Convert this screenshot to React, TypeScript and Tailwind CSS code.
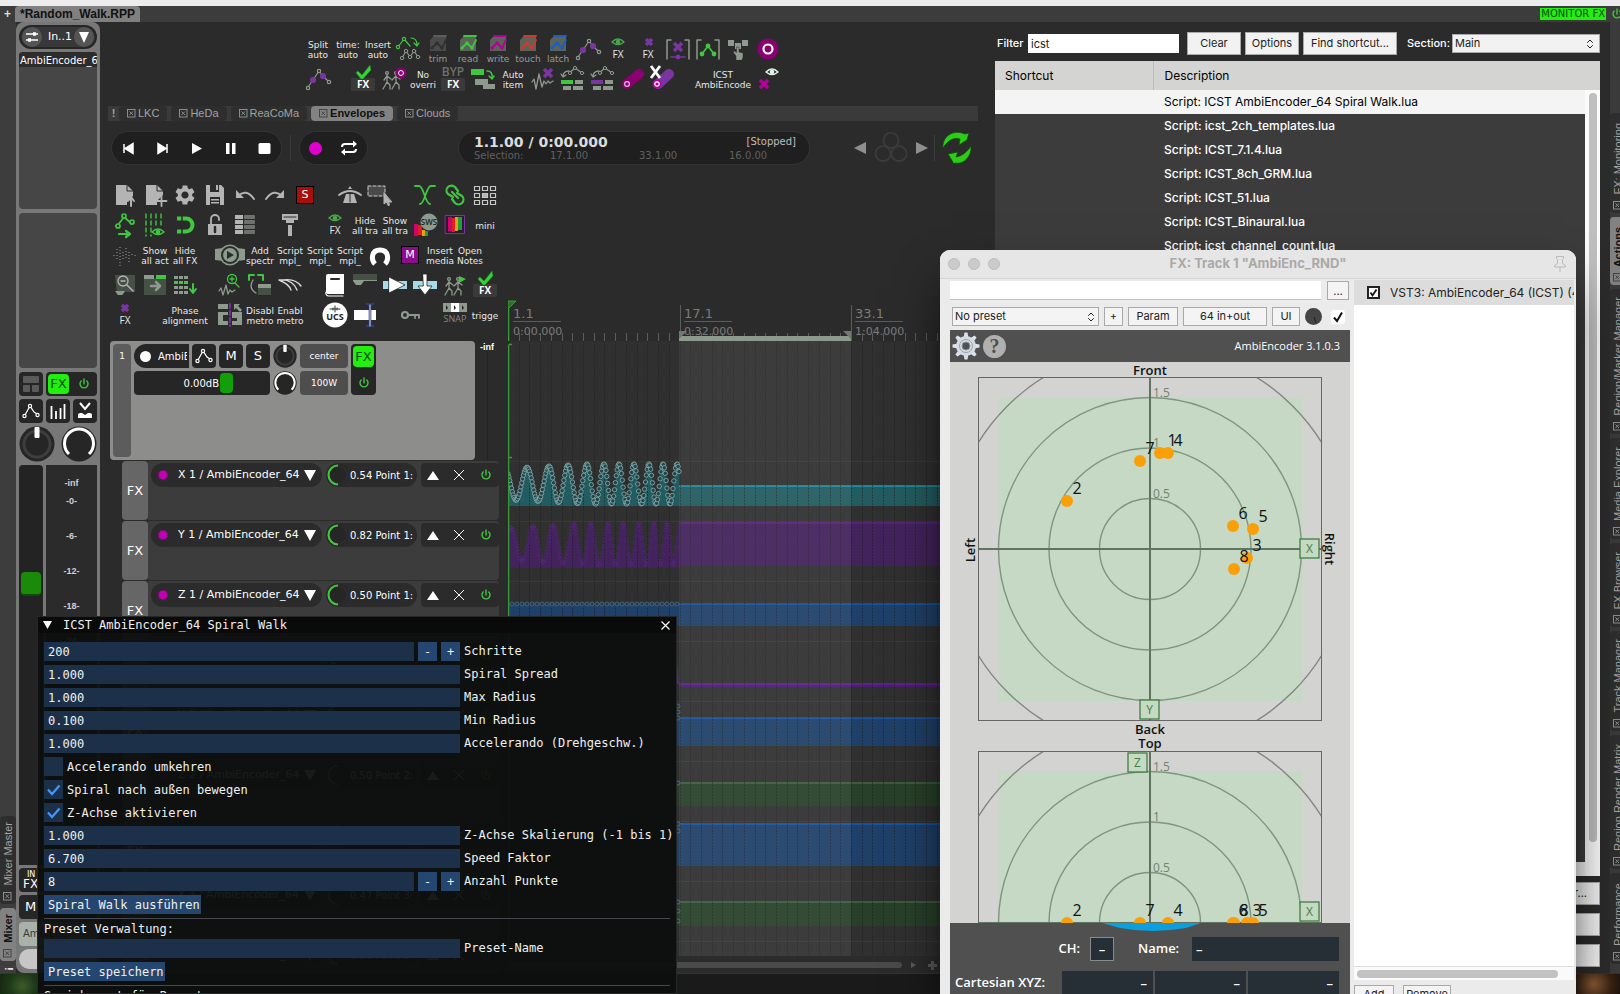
import type { ReactNode } from "react";
import clsx from "clsx";
import { MdSettings } from "react-icons/md";
import { LuChevronsUpDown } from "react-icons/lu";

const GREEN = "#3fc83f";
const GREY = "#b4b4b4";
const SAGE = "#8d9a8d";
const PURPLE = "#7a35a0";
const MAGENTA = "#8a0070";

/* ---------- small drawings ---------- */

function Ico({ children }: { children: ReactNode }) {
  return (
    <svg viewBox="0 0 30 30" className="size-[30px] overflow-visible" fill="none" strokeLinecap="round" strokeLinejoin="round">
      {children}
    </svg>
  );
}

function Nodes({ line = SAGE, dot = "#2b2b2b" }: { line?: string; dot?: string }) {
  return (
    <g stroke={line} strokeWidth="1.200">
      <path d="M5 23L10 16L16 7L20 12L25 17" />
      <circle cx="5" cy="24" r="1.700" fill="#2b2b2b" />
      <circle cx="16" cy="7" r="1.700" fill="#2b2b2b" />
      <circle cx="26" cy="18" r="1.700" fill="#2b2b2b" />
      <circle cx="10" cy="16" r="2.500" fill={dot} stroke={dot} />
      <circle cx="20" cy="12" r="2.500" fill={dot} stroke={dot} />
    </g>
  );
}

function Tick() {
  return (
    <>
      <rect x="3" y="14" width="24" height="13" rx="1" fill="#3a3a3a" />
      <path d="M10 7l4 4L22 1l1 5-8 9h-2L8 9z" fill="#35d435" stroke="#1c7a1c" strokeWidth="0.600" />
      <text x="15" y="24" textAnchor="middle" fontSize="10" fontWeight="700" fill="#fff" fontFamily="Open Sans, sans-serif">FX</text>
    </>
  );
}

function FxUnder({ children }: { children: ReactNode }) {
  return (
    <>
      {children}
      <text x="15" y="24" textAnchor="middle" fontSize="10" fill="#e8e8e8" fontFamily="Open Sans, sans-serif">FX</text>
    </>
  );
}

function EyeShape({ color = "#4aa64a", x = 15, y = 8 }: { color?: string; x?: number; y?: number }) {
  return (
    <g transform={`translate(${x} ${y})`}>
      <path d="M-6 0Q0-6 6 0Q0 5 -6 0z" stroke={color} strokeWidth="1.500" />
      <circle r="2.300" fill={color} />
    </g>
  );
}

function CrossShape({ x, y, color = PURPLE, size = 4 }: { x: number; y: number; color?: string; size?: number }) {
  return (
    <path
      d={`M${x - size} ${y - size}l${size * 2} ${size * 2}m0-${size * 2}l-${size * 2} ${size * 2}`}
      stroke={color}
      strokeWidth="3.600"
      strokeLinecap="butt"
    />
  );
}

function Walkers() {
  return (
    <g stroke={SAGE} strokeWidth="1.300">
      <circle cx="9" cy="9" r="1.400" />
      <circle cx="18" cy="9" r="1.400" />
      <path d="M9 11v7M9 12l-3 4M9 12l4 3M9 18l-4 7M9 18l3 3v4M18 11v7M18 12l-4 4M18 12l4 3M18 18l-4 7M18 18l3 3v4" />
    </g>
  );
}

function ModeIcon({ color, dim }: { color: string; dim?: boolean }) {
  const c = dim ? "#303030" : color;
  return (
    <Ico>
      <path d="M7 6l4-4h12v15H7z" fill={dim ? "#4a4c4a" : "#5b635b"} />
      <path d="M11 2h12" stroke={dim ? "#5b5b5b" : color} strokeWidth="1.800" />
      <path d="M9 14l5-5 5 5 4-8" stroke={c} strokeWidth="1.800" />
      <circle cx="9" cy="14" r="1.700" fill={c} />
      <circle cx="19" cy="14" r="1.700" fill={c} />
      <circle cx="14" cy="9" r="1.700" fill={c} />
    </Ico>
  );
}

function Power({ className = "size-3.5" }: { className?: string }) {
  return (
    <svg viewBox="0 0 14 14" className={className} fill="none" stroke={GREEN} strokeWidth="1.400" strokeLinecap="round">
      <path d="M7 2v5M4.200 4a4 4 0 1 0 5.600 0" />
    </svg>
  );
}

function TrackNodes() {
  return (
    <svg viewBox="0 0 24 24" className="size-6" fill="none" stroke="#fff" strokeWidth="1.200">
      <path d="M6 16L11 7L15 13L18 15" />
      <circle cx="5.500" cy="17" r="1.600" fill="#262626" />
      <circle cx="11" cy="7" r="1.600" fill="#262626" />
      <circle cx="18.500" cy="16" r="1.600" fill="#262626" />
    </svg>
  );
}

function Knob({ kind, className = "size-6" }: { kind: "pan" | "ring" | "half"; className?: string }) {
  return (
    <svg viewBox="0 0 36 36" className={clsx("shrink-0", className)} fill="none">
      <circle cx="18" cy="18" r="17.500" fill="#262626" />
      {kind === "pan" && (
        <>
          <circle cx="18" cy="18" r="13" stroke="#3e3e3e" strokeWidth="3" />
          <rect x="15.500" y="1" width="5" height="11" rx="1" fill="#fff" />
        </>
      )}
      {kind === "ring" && <path d="M8 28A14.500 14.500 0 1 1 28 28" stroke="#fff" strokeWidth="3" />}
      {kind === "half" && (
        <>
          <circle cx="18" cy="18" r="15" stroke="#303030" strokeWidth="2" />
          <path d="M18 33.500A15.500 15.500 0 0 1 18 2.500" stroke={GREEN} strokeWidth="3.500" />
        </>
      )}
    </svg>
  );
}

/* ---------- toolbars ---------- */

type Cell = { name?: string; lines?: string[]; icon?: ReactNode; gap?: boolean; wide?: boolean };

const gap: Cell = { gap: true };
const text = (...lines: string[]): Cell => ({ lines });

function mode(name: string, color: string, dim?: boolean): Cell {
  return { name, lines: ["", name], icon: <ModeIcon color={color} dim={dim} /> };
}

const envelopeRows: Cell[][] = [
  [
    text("Split", "auto"),
    text("time:", "auto"),
    text("Insert", "auto"),
    {
      name: "Convert envelope",
      icon: (
        <Ico>
          <g stroke={GREEN} strokeWidth="1.200">
            <path d="M5 13l6-8 6 7" />
            <circle cx="5" cy="13" r="1.600" fill="#2b2b2b" />
            <circle cx="11" cy="5" r="1.600" fill="#2b2b2b" />
            <path d="M18 4q6 0 6 7m-3-2l3 3 2-3" />
          </g>
          <path d="M9 24l4-7 4 6 4-6 4 6" stroke={SAGE} strokeWidth="1.200" />
          {[[9, 24], [13, 17], [17, 23], [21, 17], [25, 23]].map(([x, y]) => (
            <circle key={x} cx={x} cy={y} r="1.700" stroke={SAGE} fill="#2b2b2b" />
          ))}
        </Ico>
      ),
    },
    mode("trim", "#666", true),
    mode("read", GREEN),
    mode("write", "#b3009c"),
    mode("touch", "#d0392c"),
    mode("latch", "#1b5fc0"),
    { name: "Envelope points", icon: <Ico><Nodes dot={PURPLE} /></Ico> },
    { name: "Show FX", icon: <Ico><FxUnder><EyeShape /></FxUnder></Ico> },
    { name: "Remove FX", icon: <Ico><FxUnder><CrossShape x={16} y={8} size={3} /></FxUnder></Ico> },
    {
      name: "Delete in selection",
      icon: (
        <Ico>
          <path d="M8 6H4v19M22 6h4v19" stroke={SAGE} strokeWidth="1.500" />
          <CrossShape x={15} y={13} />
          <path d="M8 23h14" stroke={PURPLE} strokeWidth="1.600" />
          <circle cx="15" cy="23" r="2.400" fill={PURPLE} />
        </Ico>
      ),
    },
    {
      name: "Select points",
      icon: (
        <Ico>
          <path d="M8 6H4v19M22 6h4v19" stroke={SAGE} strokeWidth="1.500" />
          <path d="M9 20l6-8 6 8" stroke={GREEN} strokeWidth="1.600" />
          <circle cx="9" cy="20" r="2.400" fill={GREEN} />
          <circle cx="15" cy="12" r="2.400" fill={GREEN} />
          <circle cx="21" cy="20" r="2.400" fill={GREEN} />
        </Ico>
      ),
    },
    {
      name: "Touch items",
      icon: (
        <Ico>
          <path d="M5 6h6v6H5zM12 9h6v6h-6zM19 6h6v6h-6z" fill={SAGE} />
          <path d="M13 26v-4l-3-4 1.500-1 2 1.500V13h2.500v5l4 1v4l-1 3z" fill={SAGE} stroke="#2b2b2b" strokeWidth="0.500" />
        </Ico>
      ),
    },
    {
      name: "Record ring",
      icon: (
        <Ico>
          <circle cx="15" cy="15" r="10.500" fill={MAGENTA} />
          <circle cx="15" cy="15" r="4.500" stroke="#fff" strokeWidth="2.200" />
        </Ico>
      ),
    },
  ],
  [
    { name: "Envelope nodes", icon: <Ico><Nodes dot={PURPLE} /></Ico> },
    gap,
    { name: "FX enabled", icon: <Ico><Tick /></Ico> },
    {
      name: "Walk record",
      icon: (
        <Ico>
          <Walkers />
          <circle cx="23" cy="9" r="5.500" fill={MAGENTA} />
          <circle cx="23" cy="9" r="2.500" stroke="#eee" />
        </Ico>
      ),
    },
    text("No", "overri"),
    {
      name: "Bypass FX",
      icon: (
        <Ico>
          <rect x="3" y="14" width="24" height="13" rx="1" fill="#3a3a3a" />
          <text x="15" y="12" textAnchor="middle" fontSize="12" fontWeight="600" fill="#707070" fontFamily="Open Sans, sans-serif">BYP</text>
          <text x="15" y="24" textAnchor="middle" fontSize="10" fontWeight="700" fill="#fff" fontFamily="Open Sans, sans-serif">FX</text>
        </Ico>
      ),
    },
    {
      name: "Move items",
      icon: (
        <Ico>
          <path d="M3 5h13v6H3z" fill={GREEN} />
          <path d="M7 15h13v6H7zM15 20h12v5H15z" fill={SAGE} />
          <path d="M19 7q6 0 5 7m-3-2l3 3 2-3" stroke={GREEN} strokeWidth="1.400" />
        </Ico>
      ),
    },
    text("Auto", "item"),
    {
      name: "Delete peaks",
      icon: (
        <Ico>
          <path d="M4 18l2-3 2 10 3-15 3 13 2-6 2 3 2-3 2 2 3-2" stroke={SAGE} strokeWidth="1.300" />
          <CrossShape x={20} y={9} />
        </Ico>
      ),
    },
    ...([GREEN, PURPLE] as const).map((c): Cell => ({
      name: c === GREEN ? "Envelope to items" : "Envelope to lanes",
      icon: (
        <Ico>
          <path d="M11 9l6-5 7 5" stroke={SAGE} strokeWidth="1.200" />
          <path d="M5 13q0-6 6-6M3 10l2 3 3-2" stroke={SAGE} strokeWidth="1.300" />
          <circle cx="17" cy="4" r="1.600" fill="#2b2b2b" stroke={SAGE} />
          <circle cx="12" cy="9" r="1.600" fill="#2b2b2b" stroke={SAGE} />
          <circle cx="24" cy="9" r="1.600" fill="#2b2b2b" stroke={SAGE} />
          <path d="M3 16h12v4H3z" fill={c} />
          <path d="M17 16h8v4h-8zM5 22h8v4H5zM15 22h10v4h-10z" fill={SAGE} />
        </Ico>
      ),
    })),
    {
      name: "Link record",
      icon: (
        <Ico>
          <path d="M9 20L21 10" stroke={MAGENTA} strokeWidth="10" />
          <circle cx="9" cy="20" r="2.400" stroke="#e6b8e0" strokeWidth="1.200" />
        </Ico>
      ),
    },
    {
      name: "Unlink record",
      icon: (
        <Ico>
          <path d="M10 20L21 10" stroke={PURPLE} strokeWidth="10" />
          <circle cx="9" cy="20" r="4.500" fill="#b3009c" />
          <circle cx="9" cy="20" r="2.200" stroke="#fff" strokeWidth="1.200" />
          <path d="M3 2l9 12M12 2L3 14" stroke="#fff" strokeWidth="2.800" strokeLinecap="butt" />
        </Ico>
      ),
    },
    gap,
    { lines: ["ICST", "AmbiEncode"], wide: true },
    { name: "Hide encoder", icon: <Ico><EyeShape color="#dff3e8" x={19} y={8} /><CrossShape x={11} y={20} color="#b3009c" /></Ico> },
  ],
];

const mainRows: Cell[][] = [
  [
    {
      name: "Open project",
      icon: <Ico><path d="M6 5h11l6 6v5l-6 6v3H6z" fill={GREY} /><path d="M17 5v6h6" stroke="#2b2b2b" /><path d="M21 26v-8m-3 3l3-4 3 4" stroke={GREY} strokeWidth="2" /></Ico>,
    },
    {
      name: "New project",
      icon: <Ico><path d="M6 5h11l6 6v4l-6 6v4H6z" fill={GREY} /><path d="M17 5v6h6" stroke="#2b2b2b" /><path d="M21.500 16v10m-5-5h10" stroke={GREY} strokeWidth="1.800" /></Ico>,
    },
    { name: "Project settings", icon: <MdSettings className="size-6 text-[#b4b4b4]" /> },
    {
      name: "Save",
      icon: <Ico><path d="M6 5h15l3 3v17H6z" fill={GREY} /><path d="M10 5h9v7h-9zM10 17h10v8H10z" fill="#2b2b2b" /><path d="M16 5h2v5h-2zM11 19h8v1.500h-8zM11 22h8v1.500h-8z" fill={GREY} /></Ico>,
    },
    { name: "Undo", icon: <Ico><path d="M8 16q8-8 16 3" stroke={GREY} strokeWidth="2" /><path d="M6 10v8h8z" fill={GREY} /></Ico> },
    { name: "Redo", icon: <Ico><path d="M22 16q-8-8-16 3" stroke={GREY} strokeWidth="2" /><path d="M24 10v8h-8z" fill={GREY} /></Ico> },
    {
      name: "Solo",
      icon: <span className="grid size-[18px] place-items-center border border-black bg-[#a80f08] text-[11px] text-white">S</span>,
    },
    gap,
    {
      name: "Metronome",
      icon: <Ico><path d="M4 15q11-8 22 0" stroke={GREY} strokeWidth="2" /><path d="M11 14h8l3 9H8zM13 9l2-3 2 3z" fill={GREY} /><path d="M15 14v8" stroke="#2b2b2b" /></Ico>,
    },
    {
      name: "Marquee select",
      icon: <Ico><path d="M3 6h17v10H3z" fill="#4a4a4a" stroke="#d0d0d0" strokeDasharray="3 2" /><path d="M19 13v11l2.500-2 2 4 1-1-1-3h3z" fill={GREY} stroke={GREY} /></Ico>,
    },
    gap,
    {
      name: "Crossfade",
      icon: <Ico><path d="M5 6h4c5 0 6 18 11 18M25 6h-4c-5 0-6 18-11 18" stroke={GREEN} strokeWidth="1.800" /></Ico>,
    },
    {
      name: "Grouping",
      icon: <Ico><path d="M13 17l-5-3a4.500 4.500 0 1 1 7-7l3 4M17 13l5 3a4.500 4.500 0 1 1-7 7l-3-4M12 12l6 6" stroke={GREEN} strokeWidth="2.200" /></Ico>,
    },
    {
      name: "Grid",
      icon: (
        <Ico>
          {[4.5, 12.5, 20.5].map((x) =>
            [6.5, 13.5, 20.5].map((y) => (
              <rect key={`${x}${y}`} x={x} y={y} width="5" height="4" stroke="#c8c8c8" strokeWidth="1.200" fill={x === 12.5 && y === 13.5 ? GREY : "none"} />
            ))
          )}
        </Ico>
      ),
    },
  ],
  [
    {
      name: "Move envelope points",
      icon: (
        <Ico>
          <g stroke={GREEN} strokeWidth="1.700">
            <path d="M8 15l6-8 8 7" />
            <circle cx="8" cy="16" r="2" fill="#2b2b2b" />
            <circle cx="14" cy="6" r="2" fill="#2b2b2b" />
            <circle cx="22" cy="12" r="2" fill="#2b2b2b" />
            <path d="M9 24h11m-4-3l4 3-4 3" strokeWidth="2.200" />
          </g>
        </Ico>
      ),
    },
    {
      name: "Show grid",
      icon: <Ico><path d="M6 4v22M11 4v22M16 4v11M21 4v11" stroke={GREEN} strokeWidth="1.400" strokeDasharray="4 3" /><EyeShape color={GREEN} x={18} y={22} /></Ico>,
    },
    { name: "Snap", icon: <Ico><path d="M7 8.500h9a6.500 6.500 0 0 1 0 13H7" stroke={GREEN} strokeWidth="4" strokeLinecap="butt" /><path d="M12 5v20" stroke="#2b2b2b" strokeWidth="1.500" /></Ico> },
    { name: "Lock", icon: <Ico><path d="M8 14h14v11H8z" fill={GREY} /><path d="M11 14V9a4 4 0 0 1 8 0v1" stroke={GREY} strokeWidth="1.800" /><path d="M15 17v5" stroke="#2b2b2b" strokeWidth="2.500" /></Ico> },
    {
      name: "Track list",
      icon: <Ico>{[5, 10, 15, 20].map((y) => <g key={y}><rect x="5" y={y} width="8" height="4" fill={GREY} /><rect x="14" y={y} width="11" height="4" rx="1" fill="#6e726e" /></g>)}</Ico>,
    },
    gap,
    { name: "Brush", icon: <Ico><path d="M7 4h16v6H7zM11 10h8v3h-8zM13 15h4v11h-4z" fill={GREY} /><path d="M9 7h12" stroke="#2b2b2b" /></Ico> },
    gap,
    { name: "Show FX chain", icon: <Ico><FxUnder><EyeShape /></FxUnder></Ico> },
    text("Hide", "all tra"),
    text("Show", "all tra"),
    {
      name: "SWS",
      icon: (
        <Ico>
          <path d="M4 14h4v12H4z" fill="#d6006c" /><path d="M8 15h4v10H8z" fill="#e02020" /><path d="M12 20h3v6h-3z" fill="#e0a020" /><path d="M15 21h3v5h-3z" fill="#20a030" />
          <circle cx="19" cy="12" r="8.500" fill={SAGE} />
          <text x="19" y="15" textAnchor="middle" fontSize="8" fontWeight="600" fill="#222" fontFamily="Open Sans, sans-serif">SWS</text>
        </Ico>
      ),
    },
    {
      name: "Colors",
      icon: (
        <Ico>
          <rect x="5.500" y="5.500" width="19" height="18" stroke={PURPLE} fill="#2b1a33" />
          <path d="M8 7h4v14H8z" fill="#d6006c" /><path d="M12 8h3v14h-3z" fill="#e02020" /><path d="M15 7h3v14h-3z" fill="#e0a020" /><path d="M18 7h4v13h-4z" fill="#20a030" />
        </Ico>
      ),
    },
    text("mini"),
  ],
  [
    {
      name: "Peaks",
      icon: <Ico><path d="M4 15v1M7 9v10M10 7v19M13 12v8M16 8v11M19 12v10M22 14v3M25 15v1" stroke="#8a8a8a" strokeDasharray="1 2" strokeLinecap="butt" strokeWidth="1.200" /></Ico>,
    },
    text("Show", "all act"),
    text("Hide", "all FX"),
    gap,
    {
      name: "Play camera",
      icon: <Ico><path d="M0 9l8-1v13l-8-1zM22 8l8 1v11l-8 1z" fill={SAGE} /><circle cx="15" cy="15" r="10.500" fill={SAGE} /><circle cx="15" cy="15" r="9" fill="#2b2b2b" /><circle cx="15" cy="15" r="7" fill={SAGE} /><path d="M12 11l7 4-7 4z" fill="#2b2b2b" /></Ico>,
    },
    text("Add", "spectr"),
    text("Script", "mpl_"),
    text("Script", "mpl_"),
    text("Script", "mpl_"),
    { name: "Magnet", icon: <Ico><path d="M10 24c-4-4-4-14 5-14s9 10 5 14" stroke="#fff" strokeWidth="5" strokeLinecap="butt" /></Ico> },
    {
      name: "Mute",
      icon: <span className="grid size-[18px] place-items-center border border-black bg-[#8e0a8e] text-[11px] text-white">M</span>,
    },
    text("Insert", "media"),
    text("Open", "Notes"),
  ],
  [
    { name: "Zoom item", icon: <Ico><path d="M5 5h20v17H15l-2 3H7z" fill="#465046" /><path d="M5 21h10l-3 4H8z" fill={SAGE} /><circle cx="13" cy="11" r="5" stroke={GREY} strokeWidth="1.300" /><path d="M17 15l6 6M11 11h4" stroke={GREY} strokeWidth="1.500" /></Ico> },
    { name: "Move to track", icon: <Ico><path d="M4 8h22v17H4z" fill="#465046" /><path d="M4 5h10v4H4z" fill={SAGE} /><path d="M16 5h10v4H16z" fill={GREEN} /><path d="M11 16h8m-3-4l4 4-4 4" stroke={SAGE} strokeWidth="2.500" /></Ico> },
    { name: "Insert rows", icon: <Ico>{[6, 11, 16, 21].map((y) => <path key={y} d={`M4 ${y}h4v3h-4zM9 ${y}h4v3h-4zM14 ${y}h4v3h-4z`} fill={y === 11 ? GREEN : SAGE} />)}<path d="M23 14v8m-3-3l3 4 3-4" stroke={GREEN} strokeWidth="2" /></Ico> },
    gap,
    { name: "Zoom peaks", icon: <Ico><path d="M4 21l2-3 2 7 3-10 2 9 2-4 2 2 3-2" stroke={SAGE} strokeWidth="1.300" /><circle cx="17" cy="9" r="4.500" stroke={GREEN} strokeWidth="1.300" /><path d="M20 13l4 4M17 7v4M15 9h4" stroke={GREEN} strokeWidth="1.300" /></Ico> },
    { name: "Swap", icon: <Ico><path d="M4 10V5h5M18 10V5h-5" stroke={GREEN} strokeWidth="2" /><path d="M13 14h13v11H13z" fill="#465046" /><path d="M13 14h13v4H13z" fill={SAGE} /><path d="M8 10q-5 8 3 13" stroke={SAGE} strokeWidth="1.400" /></Ico> },
    { name: "Curves", icon: <Ico><path d="M4 10q14-1 18 10M4 10q10 4 12 10M8 10q12-2 18 6" stroke="#d8d8d8" strokeWidth="1.400" /></Ico> },
    gap,
    { name: "Manual", icon: <Ico><path d="M8 4h16v20H8a2 2 0 0 1-2-2V6a2 2 0 0 1 2-2z" fill="#fff" /><path d="M6 22a3 3 0 0 0 3 4h14" stroke="#fff" strokeWidth="1.200" /><path d="M11 9h8" stroke="#2b2b2b" strokeWidth="2" /></Ico> },
    { name: "Trim edge", icon: <Ico><path d="M3 4h24v7H3z" fill="#465046" /><path d="M3 10h24v1H14l-3 4H6l-3-4z" fill={SAGE} /></Ico> },
    { name: "Nudge right", icon: <Ico><path d="M3 11h24v8H3z" fill="#a5dbe8" /><path d="M9 7l16 8-16 8z" fill="#fff" stroke="#222" strokeWidth="0.800" /></Ico> },
    { name: "Nudge down", icon: <Ico><path d="M3 11h24v8H3z" fill="#a5dbe8" /><path d="M13 4h4v12h5l-7 9-7-9h5z" fill="#fff" stroke="#222" strokeWidth="0.800" /></Ico> },
    { name: "Walk play", icon: <Ico><Walkers /><path d="M19 6l7 3-7 4z" fill={GREEN} /></Ico> },
    { name: "FX active", icon: <Ico><Tick /></Ico> },
  ],
  [
    { name: "Delete FX", icon: <Ico><FxUnder><CrossShape x={15} y={8} size={3} /></FxUnder></Ico> },
    gap,
    { lines: ["Phase", "alignment"], wide: true },
    { name: "Mirror items", icon: <Ico><path d="M3 4h10v5H3zM3 12h10v3H8v6h5v4H3zM17 12h10v13H17v-4h5v-3h-5z" fill={SAGE} /><path d="M15 4v22" stroke={PURPLE} strokeWidth="1.800" strokeDasharray="4 3" /><path d="M19 4h6l-2 2 4 4-2 2-4-4-2 2z" fill={SAGE} /></Ico> },
    text("Disabl", "metro"),
    text("Enabl", "metro"),
    gap,
    { name: "UCS", icon: <Ico><circle cx="15" cy="15" r="12.500" fill="#fff" /><text x="15" y="20" textAnchor="middle" fontSize="9" fontWeight="700" fill="#222" fontFamily="Open Sans, sans-serif">UCS</text><path d="M10 9h10M15 6v6M13 8v2M17 8v2" stroke="#333" /></Ico> },
    { name: "Rename", icon: <Ico><path d="M4 10h22v10H4z" fill="#fff" /><path d="M20 5v21M17 4q3 0 3 2 0-2 3-2M17 26q3 0 3-2 0 2 3 2" stroke="#2a3f7a" strokeWidth="2.600" /><path d="M20 5v21" stroke="#dde" /></Ico> },
    gap,
    { name: "Key", icon: <Ico><circle cx="10" cy="15" r="3" stroke={SAGE} strokeWidth="2.200" /><path d="M13 15h11v3M20 15v3" stroke={SAGE} strokeWidth="1.800" /></Ico> },
    gap,
    {
      name: "Snapshots",
      icon: (
        <Ico>
          <path d="M3 3h24v9H3z" fill={SAGE} /><path d="M11 3h8v9h-8z" fill="#fff" /><path d="M6 5v5l2-2zM14 5v5l2-2zM22 5v5l2-2z" fill="#222" />
          <text x="15" y="22" textAnchor="middle" fontSize="9" fill="#858585" fontFamily="Open Sans, sans-serif">SNAP</text>
        </Ico>
      ),
    },
    text("trigge"),
  ],
];

function Toolbar({ rows, className }: { rows: Cell[][]; className?: string }) {
  return (
    <div className={clsx("flex flex-col", className)}>
      {rows.map((row, r) => (
        <div key={r} className="flex">
          {row.map((cell, i) =>
            cell.gap ? (
              <span key={i} className="w-[15px] shrink-0" />
            ) : (
              <button
                key={i}
                type="button"
                aria-label={cell.name}
                className={clsx("relative grid h-[30px] shrink-0 place-items-center", cell.wide ? "w-[60px]" : "w-[30px]")}
              >
                {cell.icon}
                {cell.lines && !cell.icon && (
                  <span className="flex flex-col pt-px text-center text-[9px] leading-[10px] whitespace-nowrap text-[#e8e8e8]">
                    {cell.lines.map((l) => <span key={l}>{l}</span>)}
                  </span>
                )}
                {cell.lines && cell.icon && (
                  <span className="absolute -bottom-px text-[9px] leading-3 text-[#9a9a9a]">{cell.lines[1]}</span>
                )}
              </button>
            )
          )}
        </div>
      ))}
    </div>
  );
}

/* ---------- docker tabs ---------- */

function CloseBox({ dark }: { dark?: boolean }) {
  return (
    <svg viewBox="0 0 9 9" className="size-[9px] shrink-0" fill="none" stroke={dark ? "#444" : "#8c8c8c"}>
      <rect x="0.500" y="0.500" width="7.500" height="7.500" />
      <path d="M2.500 2.500l3.500 3.500M6 2.500L2.500 6" />
    </svg>
  );
}

function SideTab({ label, active, className }: { label: string; active?: boolean; className?: string }) {
  return (
    <button
      type="button"
      className={clsx(
        "flex w-4 shrink-0 flex-col items-start justify-end gap-1.5 rounded-sm pb-[3px] pl-[3px] text-[11px] leading-[11px]",
        active ? "bg-[#828282] font-bold text-[#111]" : "bg-[#2e2e2e] text-[#a2a2a2]",
        className
      )}
    >
      <span className="rotate-180 whitespace-nowrap [writing-mode:vertical-rl]">{label}</span>
      <CloseBox dark={active} />
    </button>
  );
}

const dockTabs = [
  { name: "LKC", active: false },
  { name: "HeDa", active: false },
  { name: "ReaCoMa", active: false },
  { name: "Envelopes", active: true },
  { name: "Clouds", active: false },
];

/* ---------- mixer strip ---------- */

function MixerStrip() {
  return (
    <aside className="flex w-[84px] shrink-0 flex-col gap-[3px] rounded-lg bg-[#787878] px-[3px] pt-[3px] text-white">
      <div className="flex h-6 shrink-0 items-center justify-between rounded-full border-2 border-[#262626] bg-[#383838] px-px text-[11px]">
        <svg viewBox="0 0 20 20" className="size-5" fill="none" stroke="#fff" strokeWidth="1.600">
          <circle cx="10" cy="10" r="10" fill="#555" stroke="none" />
          <path d="M4 7h12M4 13h12" />
          <path d="M11 7h3M6 13h3" strokeWidth="3.500" />
        </svg>
        <span className="pl-1">In..1</span>
        <svg viewBox="0 0 20 20" className="size-5"><circle cx="10" cy="10" r="10" fill="#555" /><path d="M5 5h10l-5 11z" fill="#fff" /></svg>
      </div>
      <div className="h-[157px] shrink-0 overflow-hidden rounded-sm bg-[#464646]">
        <p className="overflow-hidden bg-[#2c2c2c] pt-[3px] pl-px text-[10px] leading-3 whitespace-nowrap">AmbiEncoder_64</p>
      </div>
      <div className="mt-px h-[155px] shrink-0 rounded-sm bg-[#464646]" />
      <div className="mt-px flex h-6 shrink-0 gap-[3px]">
        <button type="button" aria-label="Routing" className="grid w-6 place-items-center rounded-sm bg-[#262626]">
          <svg viewBox="0 0 18 16" className="h-4 w-[18px]" fill="#5a5a5a"><rect x="1" width="16" height="7" rx="1" /><rect x="1" y="9" width="7" height="7" rx="1" /><rect x="10" y="9" width="7" height="7" rx="1" /></svg>
        </button>
        <div className="flex flex-1 items-center justify-between rounded-sm bg-[#262626] pr-1.5 pl-[2px]">
          <button type="button" className="h-5 w-[21px] rounded-sm bg-[#22ee10] text-[13px] leading-5 text-[#0c4d08]">FX</button>
          <button type="button" aria-label="Bypass"><Power /></button>
        </div>
      </div>
      <div className="flex h-6 shrink-0 gap-[3px]">
        <button type="button" aria-label="Envelopes" className="flex-1 rounded-sm bg-[#262626]"><TrackNodes /></button>
        <button type="button" aria-label="Meters" className="flex-1 rounded-sm bg-[#262626]">
          <svg viewBox="0 0 24 24" className="size-6" stroke="#fff" strokeWidth="1.800"><path d="M5.500 7v13M10 12v8M14.500 9v11M18.500 5v15" /></svg>
        </button>
        <button type="button" aria-label="Phase" className="flex-1 rounded-sm bg-[#262626]">
          <svg viewBox="0 0 24 24" className="size-6" fill="none" stroke="#fff" strokeWidth="2"><path d="M7 4l5 6 5-6" /><path d="M5 19v-4l2-1h2l3 2 3-2h2l2 1v4z" fill="#fff" stroke="none" /></svg>
        </button>
      </div>
      <div className="flex shrink-0 justify-between">
        <Knob kind="pan" className="size-9" />
        <Knob kind="ring" className="size-9" />
      </div>
      <div className="flex min-h-0 flex-1 gap-[3px]">
        <div className="flex w-6 flex-col items-center rounded-t-sm bg-[#232323] pt-[107px]">
          <div className="h-6 w-5 rounded-sm border-b-2 border-[#0c4d08] bg-[#1a8a08]" />
        </div>
        <div className="flex flex-1 flex-col items-center bg-[#2b2b2b] pt-[11px] font-['Liberation_Sans',sans-serif] text-[9px] leading-[15px] font-bold text-[#d0d0d0]">
          <span>-inf</span>
          <span className="mt-[3px]">-0-</span>
          {["-6-", "-12-", "-18-", "-24-", "-30-"].map((t) => <span key={t} className="mt-5">{t}</span>)}
        </div>
      </div>
      <button type="button" className="h-6 shrink-0 rounded-sm bg-[#262626] pl-1 text-left text-[12px] leading-[11px]">
        <span className="block pl-1 text-[8px] leading-[9px]">IN</span>FX
      </button>
      <button type="button" className="h-6 shrink-0 rounded-sm bg-[#262626] pl-1.5 text-left text-[13px]">M</button>
      <p className="h-6 shrink-0 rounded-sm bg-[#a9b2a9] pl-1 text-[10px] leading-6 text-[#3a3a3a]">AmbiEnc</p>
      <div className="mb-1 h-5 shrink-0 rounded-full bg-[#c6c6c6]" />
    </aside>
  );
}

/* ---------- transport ---------- */

function Transport() {
  return (
    <section className="mt-[10px] flex h-[34px] items-center pl-[11px] text-white">
      <div className="flex h-full w-[171px] items-center justify-between rounded-full border border-[#343434] bg-[#1f1f1f] px-2">
        {[
          ["Go to start", "M4 4v9M13 3.500v10L5 8.500z"],
          ["Go to end", "M13 4v9M4 3.500v10l8-5z"],
          ["Play", "M4 3v11l10-5.500z"],
          ["Pause", "M4 3h3.500v11H4zM10 3h3.500v11H10z"],
          ["Stop", "M4 3h9a1.500 1.500 0 0 1 1.500 1.500v8a1.500 1.500 0 0 1-1.500 1.500H4a1.500 1.500 0 0 1-1.500-1.500v-8A1.500 1.500 0 0 1 4 3z"],
        ].map(([name, d]) => (
          <button key={name} type="button" aria-label={name}>
            <svg viewBox="0 0 17 17" className="size-[17px]" fill="#fff" stroke="#fff" strokeWidth={name.startsWith("Go") ? 1.5 : 0}><path d={d} /></svg>
          </button>
        ))}
      </div>
      <span className="mx-2 h-[26px] w-px bg-[#3c3c3c]" />
      <div className="flex h-full w-[69px] items-center justify-around rounded-full border border-[#343434] bg-[#1f1f1f]">
        <button type="button" aria-label="Record" className="size-[13px] rounded-full bg-[#e000d0]" />
        <button type="button" aria-label="Repeat">
          <svg viewBox="0 0 18 16" className="h-4 w-[18px]" fill="none" stroke="#fff" strokeWidth="2"><path d="M2 7q0-3 3-3h9M16 9q0 3-3 3H4" /><path d="M13 0.500l4 3.500-4 3.500zM5 8.500L1 12l4 3.500z" fill="#fff" stroke="none" /></svg>
        </button>
      </div>
      <div className="ml-[90px] flex h-full w-[352px] flex-col justify-center rounded-full border border-[#343434] bg-[#1f1f1f] pr-[13px] pl-[15px]">
        <div className="flex items-start justify-between">
          <span className="text-[14px] leading-4 font-bold text-[#dcdcdc]">1.1.00 / 0:00.000</span>
          <span className="text-[10px] leading-4 text-[#bdbdbd]">[Stopped]</span>
        </div>
        <div className="flex text-[10px] leading-3 text-[#606060]">
          <span className="w-[76px]">Selection:</span>
          <span className="w-[89px]">17.1.00</span>
          <span className="w-[90px]">33.1.00</span>
          <span>16.0.00</span>
        </div>
      </div>
      <div className="ml-11 flex items-center">
        <button type="button" aria-label="Previous"><svg viewBox="0 0 12 14" className="h-3.5 w-3" fill="#8f8f8f"><path d="M12 1v12L0 7z" /></svg></button>
        <svg viewBox="0 0 36 36" className="mx-2 h-9 w-[34px]" fill="none" stroke="#3b3b3b" strokeWidth="2"><circle cx="18" cy="10" r="8" /><circle cx="9.500" cy="24" r="8" /><circle cx="26.500" cy="24" r="8" /></svg>
        <button type="button" aria-label="Next"><svg viewBox="0 0 12 14" className="h-3.5 w-3" fill="#8f8f8f"><path d="M0 1v12l12-6z" /></svg></button>
        <span className="mx-1.5 h-[26px] w-px bg-[#3c3c3c]" />
        <button type="button" aria-label="Sync">
          <svg viewBox="0 0 32 34" className="h-[34px] w-8" fill="#2ecc18" stroke="#0d5208" strokeWidth="0.800">
            <path d="M2 17C1 7 10-1 21 2l3 1 4-1-2 7-8 5 1-6C13 6 7 9 2 17z" />
            <path d="M30 15c1 10-7 19-16 17l-1 1-6-10 10-2-2 5c6-1 11-5 15-11z" />
          </svg>
        </button>
      </div>
    </section>
  );
}

/* ---------- track panel ---------- */

const lanes = [
  { name: "X 1 / AmbiEncoder_64", value: "0.54 Point 1:" },
  { name: "Y 1 / AmbiEncoder_64", value: "0.82 Point 1:" },
  { name: "Z 1 / AmbiEncoder_64", value: "0.50 Point 1:" },
  { name: "X 2 / AmbiEncoder_64", value: "0.20 Point 2:" },
  { name: "Y 2 / AmbiEncoder_64", value: "0.66 Point 2:" },
  { name: "Z 2 / AmbiEncoder_64", value: "0.50 Point 2:" },
  { name: "X 3 / AmbiEncoder_64", value: "0.62 Point 3:" },
  { name: "Y 3 / AmbiEncoder_64", value: "0.47 Point 3:" },
  { name: "Z 3 / AmbiEncoder_64", value: "0.50 Point 3:" },
];

function TrackPanel() {
  const key = "grid h-6 w-6 place-items-center rounded-sm bg-[#262626] text-[13px] text-white";
  return (
    <div className="flex">
      <div className="flex h-[119px] w-[365px] gap-[3px] rounded-sm bg-[#8d8d8b] p-[3px] text-white">
        <div className="w-[18px] rounded bg-[#5c5c5c] pt-1.5 text-center text-[9px]">1</div>
        <div className="flex flex-col gap-[3px]">
          <div className="flex gap-[3px]">
            <div className="flex h-6 w-[55px] items-center gap-[7px] overflow-hidden rounded-l-full rounded-r-sm bg-[#262626] pl-1.5 text-[10px]">
              <button type="button" aria-label="Arm" className="size-[11px] shrink-0 rounded-full bg-white" />
              <span className="w-[29px] overflow-hidden whitespace-nowrap">AmbiEnc</span>
            </div>
            <button type="button" aria-label="Envelopes" className={key}><TrackNodes /></button>
            <button type="button" className={key}>M</button>
            <button type="button" className={key}>S</button>
            <Knob kind="pan" />
            <span className="h-6 w-12 rounded-sm bg-[#4e4e4e] text-center text-[9px] leading-6">center</span>
          </div>
          <div className="flex gap-[3px]">
            <div className="flex h-6 w-[136px] items-center rounded-sm bg-[#262626]">
              <span className="w-[85px] text-right text-[10px]">0.00dB</span>
              <span className="ml-px h-5 w-[13px] rounded-sm bg-[#12a008]" />
            </div>
            <Knob kind="ring" />
            <span className="h-6 w-12 rounded-sm bg-[#4e4e4e] text-center text-[9px] leading-6">100W</span>
          </div>
        </div>
        <div className="flex h-[51px] w-[25px] flex-col items-center gap-[9px] rounded-sm bg-[#262626] pt-[2px]">
          <button type="button" className="h-[21px] w-[21px] rounded-sm bg-[#22ee10] text-[13px] leading-[21px] text-[#0c4d08]">FX</button>
          <button type="button" aria-label="FX bypass"><Power /></button>
        </div>
      </div>
      <div className="ml-[5px] flex flex-col items-center font-['Liberation_Sans',sans-serif] text-[9px] leading-3 font-bold text-white">
        -inf
        <span className="w-px flex-1 bg-[#222]" />
      </div>
    </div>
  );
}

function EnvelopeLane({ name, value }: { name: string; value: string }) {
  return (
    <div className="flex h-[60px] pt-px text-white">
      <button type="button" className="w-[26px] rounded-sm bg-[#666] text-[13px]">FX</button>
      <div className="flex flex-1 items-start gap-1 rounded-r bg-[#3c3c3c] pt-[2px] pl-[3px]">
        <div className="flex h-6 w-[171px] items-center rounded-full bg-[#2b2b2b] pl-[7px] text-[11px] whitespace-nowrap">
          <span className="mr-[10px] size-[10px] shrink-0 rounded-full border border-dotted border-[#2b2b2b] bg-[#c000b4]" />
          <span className="flex-1">{name}</span>
          <svg viewBox="0 0 12 11" className="mr-1.5 h-[11px] w-3 shrink-0" fill="#fff"><path d="M0 0h12L6 11z" /></svg>
        </div>
        <div className="flex h-6 w-[91px] items-center gap-px rounded-full bg-[#2b2b2b] pl-px text-[10px] whitespace-nowrap">
          <Knob kind="half" className="size-[22px]" />
          {value}
        </div>
        <div className="flex h-6 flex-1 items-center justify-between rounded-sm bg-[#2b2b2b] px-1.5">
          <svg viewBox="0 0 12 9" className="h-[9px] w-3" fill="#fff"><path d="M0 9h12L6 0z" /></svg>
          <svg viewBox="0 0 10 10" className="size-2.5" stroke="#fff"><path d="M0 0l10 10M10 0L0 10" /></svg>
          <Power />
        </div>
      </div>
    </div>
  );
}

/* ---------- arrange view ---------- */

const STEP = 10.72;
const SEL_START = 171;
const SEL_END = 343;

// Position between two neighbouring peaks gives the phase of the sweep.
function sweep(peaks: number[], mid: number, amp: number) {
  return Array.from({ length: 200 }, (_, i) => {
    const x = (i / 199) * SEL_START;
    let k = peaks.findIndex((p) => p > x);
    if (k === -1) k = peaks.length - 1;
    const a = k === 0 ? peaks[0] - 22 : peaks[k - 1];
    const t = (x - a) / (peaks[k] - a);
    const grow = 0.78 + 0.22 * Math.min(1, x / 80);
    return [x, mid - Math.cos(t * Math.PI * 2) * amp * grow];
  });
}

const teal = sweep([19, 41, 60, 79, 96, 111, 126, 141, 155, 169], 143, 20);
const violet = sweep([3, 25, 45, 66, 83, 100, 115, 131, 146, 159, 172], 203, 21);
const area = (pts: number[][], base: number) => `M0 ${base}L${pts.map((p) => p.join(" ")).join("L")}L${SEL_START} ${base}z`;

const bands = [
  { top: 145, bottom: 165, from: SEL_START, fill: "#235c60", line: "#1e9cb0" },
  { top: 182, bottom: 225, from: SEL_START, fill: "#43235c", line: "#5f1f94" },
  { top: 263, bottom: 285, from: 0, fill: "#1f4068", line: "#1759b0" },
  { top: 343, bottom: 346, from: SEL_START, fill: "#4a2070", line: "#6a1fa0" },
  { top: 377, bottom: 405, from: SEL_START - 4, fill: "#1f4068", line: "#1759b0" },
  { top: 442, bottom: 465, from: SEL_START - 4, fill: "#284029", line: "#3f6a40" },
  { top: 483, bottom: 525, from: SEL_START - 4, fill: "#1f4068", line: "#1759b0" },
  { top: 561, bottom: 585, from: SEL_START - 4, fill: "#284029", line: "#3f6a40" },
];

function Arrange() {
  const cols = Array.from({ length: 60 }, (_, i) => Math.round(i * STEP) + 0.5);
  return (
    <svg className="min-h-0 w-full flex-1 bg-[#303030]" fill="none">
      {Array.from({ length: 9 }, (_, i) => (
        <path key={i} d={`M0 ${120.5 + i * 60}H2000`} stroke="#3a3a3a" />
      ))}
      {bands.map((b) => (
        <g key={b.top}>
          <rect x={b.from} y={b.top} width="2000" height={b.bottom - b.top} fill={b.fill} />
          <path d={`M${b.from} ${b.top}H2000`} stroke={b.line} strokeWidth="1.500" />
        </g>
      ))}
      <path d={area(teal, 165)} fill="#235c60" />
      <path d={area(violet, 226)} fill="#43235c" stroke="#43235c" strokeWidth="2" />
      {cols.map((x) => (
        <path key={x} d={`M${x} 0V2000`} stroke="#1c1c1c" strokeDasharray="2 1" opacity="0.500" />
      ))}
      <rect x={SEL_START} width={SEL_END - SEL_START} height="2000" fill="#fff" opacity="0.060" />
      {violet.map(([x, y]) => (
        <circle key={x} cx={x} cy={y} r="1.800" stroke="#5c2a86" strokeWidth="0.800" strokeDasharray="1 1" />
      ))}
      {teal.map(([x, y]) => (
        <circle key={x} cx={x} cy={y} r="2.200" fill="#25454a" stroke="#86b3b3" strokeWidth="0.800" />
      ))}
      {Array.from({ length: 34 }, (_, i) => (
        <circle key={i} cx={4 + i * 5} cy="263" r="2" fill="#263a4e" stroke="#4f6a80" strokeWidth="0.800" />
      ))}
      <path d="M167 305l3 38" stroke="#5a2a80" strokeWidth="2" />
      {[365, 371, 377, 442, 483, 490, 561, 570, 580].map((y) => (
        <circle key={y} cx="170" cy={y} r="2" fill="#263a4e" stroke="#5a7a80" strokeWidth="0.800" />
      ))}
      <path d="M0.500 3.500V2000M1 3.500h3M1 116.500h3" stroke="#3a9a3a" strokeWidth="1.500" />
    </svg>
  );
}

function Ruler() {
  const marks = [
    ["1.1", "0:00.000"],
    ["17.1", "0:32.000"],
    ["33.1", "1:04.000"],
  ];
  return (
    <div className="relative h-[41px] shrink-0 overflow-hidden text-[#7b7b7b]">
      <svg className="absolute inset-0 size-full" fill="none">
        {Array.from({ length: 60 }, (_, i) => (
          <path key={i} d={`M${Math.round(i * STEP) + 0.5} ${i % 16 ? 33 : 5}V41`} stroke="#5c5c5c" />
        ))}
        <rect x={SEL_START} y="36" width={SEL_END - SEL_START} height="5" fill="#8c9a8c" />
        <path d={`M${SEL_START} 31h8l-8 8zM${SEL_END} 31h-8l8 8z`} fill="#6f7a6f" />
        <path d="M0.500 1V41" stroke="#3a9a3a" strokeWidth="1.500" />
        <path d="M0 1h8L0 9z" fill="#2f6e2f" stroke="#3a9a3a" />
      </svg>
      <div className="relative flex">
        {marks.map(([bar, time]) => (
          <div key={bar} className="w-[171px] shrink-0 pt-1.5 pl-[5px]">
            <span className="block w-12 border-b border-[#5c5c5c] text-[13px] leading-[15px]">{bar}</span>
            <span className="block text-[11px] leading-5">{time}</span>
          </div>
        ))}
      </div>
    </div>
  );
}

/* ---------- actions list ---------- */

const actions = [
  "Script: ICST AmbiEncoder_64 Spiral Walk.lua",
  "Script: icst_2ch_templates.lua",
  "Script: ICST_7.1.4.lua",
  "Script: ICST_8ch_GRM.lua",
  "Script: ICST_51.lua",
  "Script: ICST_Binaural.lua",
  "Script: icst_channel_count.lua",
];

function Actions() {
  const btn = "h-[23px] border border-[#a9a9a9] bg-[#f2f2f2] text-[#222]";
  return (
    <section className="flex w-[626px] shrink-0 flex-col pt-[10px] pr-[10px] pl-[11px] font-[Inter,sans-serif] text-[11px]">
      <div className="flex h-[23px] shrink-0 items-center">
        <label htmlFor="filter" className="w-[33px] pl-[2px] font-medium text-white">Filter</label>
        <input id="filter" defaultValue="icst" className="mr-2 h-[19px] w-[151px] bg-white px-[3px] text-[#222] outline-none" />
        <button type="button" className={clsx(btn, "mr-1 w-[54px]")}>Clear</button>
        <button type="button" className={clsx(btn, "mr-1 w-[54px]")}>Options</button>
        <button type="button" className={clsx(btn, "w-[94px]")}>Find shortcut...</button>
        <label htmlFor="section" className="w-[55px] pl-2.5 font-medium text-white">Section:</label>
        <div className="relative flex-1">
          <select id="section" className="h-[19px] w-full appearance-none border border-[#a9a9a9] bg-[#f2f2f2] px-[2px] text-[#222]">
            <option>Main</option>
          </select>
          <LuChevronsUpDown className="pointer-events-none absolute top-1 right-1 size-3 text-[#222]" />
        </div>
      </div>
      <div className="mt-1.5 flex h-[815px] shrink-0 bg-[#f4f4f4]">
        <div className="mb-[14px] flex-1 bg-[#3c3c3c] text-[12px]">
          <table className="w-full table-fixed text-left">
            <thead>
              <tr className="h-[29px] bg-[#d4d4d2] text-black">
                <th className="w-[158px] border-r border-[#bbb] pl-2.5 font-normal">Shortcut</th>
                <th className="pl-[11px] font-normal">Description</th>
              </tr>
            </thead>
            <tbody>
              {actions.map((a, i) => (
                <tr key={a} className={clsx("h-6", i === 0 ? "bg-[#f4f4f4] text-black" : "font-medium text-white")}>
                  <td />
                  <td className="pl-[11px]">{a}</td>
                </tr>
              ))}
            </tbody>
          </table>
        </div>
        <div className="w-[15px] bg-[#fbfbfb]">
          <div className="h-[29px] bg-[#d4d4d2]" />
          <div className="mx-auto mt-[3px] h-[749px] w-2 rounded-full bg-[#bfbfbf]" />
        </div>
      </div>
      <div className="mt-1.5 flex flex-col items-end gap-2">
        <button type="button" className={clsx(btn, "w-[125px] shrink-0 pr-3 text-right whitespace-nowrap")}>Find shortcut for...</button>
        <button type="button" aria-label="Run" className={clsx(btn, "w-[125px] shrink-0")} />
        <button type="button" aria-label="Close" className={clsx(btn, "w-[125px] shrink-0")} />
      </div>
    </section>
  );
}

/* ---------- spiral walk window ---------- */

function Field({ id, label, value, steps }: { id: string; label: string; value: string; steps?: boolean }) {
  const step = "w-[19px] bg-[#25466f]";
  return (
    <div className="flex h-[19px] shrink-0 gap-1">
      <div className="flex w-[416px] shrink-0 gap-1">
        <input id={id} defaultValue={value} className="min-w-0 flex-1 bg-[#1d3049] px-1 outline-none" />
        {steps && <button type="button" className={step}>-</button>}
        {steps && <button type="button" className={step}>+</button>}
      </div>
      <label htmlFor={id} className="leading-[19px] whitespace-nowrap">{label}</label>
    </div>
  );
}

function Check({ label, on }: { label: string; on?: boolean }) {
  return (
    <label className="relative flex h-[19px] shrink-0 items-center gap-1">
      <input type="checkbox" defaultChecked={on} className="peer size-[19px] appearance-none bg-[#1d3049]" />
      <svg viewBox="0 0 19 19" className="pointer-events-none absolute left-0 hidden size-[19px] peer-checked:block" fill="none" stroke="#4296fa" strokeWidth="2.200">
        <path d="M4 9.500l4 4.500 7.500-8.500" />
      </svg>
      {label}
    </label>
  );
}

function SpiralWalk() {
  return (
    <div className="absolute top-[616px] bottom-0 left-[37px] flex w-[640px] flex-col overflow-hidden border border-[#262828] bg-[#0d0f0e]/95 font-['DejaVu_Sans_Mono','Liberation_Mono',monospace] text-[12px] text-[#f0f0f0]">
      <header className="flex h-4 shrink-0 items-center bg-[#0a0a0a] px-[5px]">
        <svg viewBox="0 0 9 8" className="mr-[11px] h-2 w-[9px]" fill="#fff"><path d="M0 0h9L4.500 8z" /></svg>
        <h2 className="flex-1">ICST AmbiEncoder_64 Spiral Walk</h2>
        <button type="button" aria-label="Close" className="mr-px">
          <svg viewBox="0 0 9 9" className="size-[9px]" stroke="#fff" strokeWidth="1.200"><path d="M0.500 0.500l8 8M8.500 0.500l-8 8" /></svg>
        </button>
      </header>
      <div className="flex flex-col gap-1 px-1.5 pt-[9px]">
        <Field id="steps" label="Schritte" value="200" steps />
        <Field id="spread" label="Spiral Spread" value="1.000" />
        <Field id="max" label="Max Radius" value="1.000" />
        <Field id="min" label="Min Radius" value="0.100" />
        <Field id="acc" label="Accelerando (Drehgeschw.)" value="1.000" />
        <Check label="Accelerando umkehren" />
        <Check label="Spiral nach außen bewegen" on />
        <Check label="Z-Achse aktivieren" on />
        <Field id="zscale" label="Z-Achse Skalierung (-1 bis 1)" value="1.000" />
        <Field id="speed" label="Speed Faktor" value="6.700" />
        <Field id="points" label="Anzahl Punkte" value="8" steps />
        <button type="button" className="h-[19px] shrink-0 self-start bg-[#25466f] pr-px pl-1">Spiral Walk ausführen</button>
        <hr className="shrink-0 border-[#47474f]" />
        <p className="h-3 shrink-0 leading-3">Preset Verwaltung:</p>
        <Field id="preset" label="Preset-Name" value="" />
        <button type="button" className="h-[19px] shrink-0 self-start bg-[#25466f] pr-px pl-1">Preset speichern</button>
        <hr className="shrink-0 border-[#47474f]" />
        <p className="h-3 shrink-0 leading-3">Speicherort für Presets:</p>
      </div>
    </div>
  );
}

/* ---------- FX window ---------- */

type Source = { id: string; x: number; y: number };

const sources: Source[] = [
  { id: "2", x: 117, y: 139 },
  { id: "7", x: 190, y: 99 },
  { id: "1", x: 210, y: 91 },
  { id: "4", x: 218, y: 91 },
  { id: "6", x: 283, y: 164 },
  { id: "5", x: 303, y: 167 },
  { id: "3", x: 297, y: 196 },
  { id: "8", x: 284, y: 207 },
];

function AxisBox({ x, y, label }: { x: number; y: number; label: string }) {
  return (
    <g>
      <rect x={x} y={y} width="19" height="19" fill="#c5d9c5" stroke="#3f7f3f" strokeWidth="1.300" />
      <text x={x + 9.5} y={y + 14} textAnchor="middle" fontSize="12" fill="#3f7f3f">{label}</text>
    </g>
  );
}

function Plot({ height, side }: { height: number; side?: boolean }) {
  const cx = 200;
  const cy = 187;
  const id = side ? "side" : "top";
  const shown = sources.filter((s) => !side || s.id !== "1");
  return (
    <svg viewBox={`0 0 400 ${height}`} className="w-[400px] shrink-0" style={{ height }} fill="none" fontWeight="400" fontFamily="Open Sans, DejaVu Sans, sans-serif">
      <clipPath id={id}><rect x="28.500" y="15.500" width="343" height={side ? height : 343} /></clipPath>
      <rect x="48.500" y="35" width="304" height="304" fill="#c5d9c5" />
      <g clipPath={`url(#${id})`} stroke="#7f957f" strokeWidth="1.400">
        <circle cx={cx} cy={cy} r="50.500" />
        <circle cx={cx} cy={cy} r="101" />
        <circle cx={cx} cy={cy} r="151.500" />
        <circle cx={cx} cy={cy} r="202" stroke="#858585" />
      </g>
      <path d={`M${cx} 15V${side ? cy : 359}M28 ${cy}H372`} stroke="#5f755f" strokeWidth="2" />
      <rect x="28.500" y="15.500" width="343" height="343" stroke="#666" />
      <g fontSize="12" fill="#6f856f">
        <text x="203" y="35">1.5</text>
        <text x="203" y="85">1</text>
        <text x="203" y="136">0.5</text>
      </g>
      <g fontSize="16" fontWeight="500" fill="#111" textAnchor="middle">
        {shown.map((s) => (
          <circle key={s.id} cx={s.x} cy={side ? cy : s.y} r="6" fill="#fb9f08" />
        ))}
        {shown.map((s) => (
          <text key={s.id} x={s.x + (s.id === "1" ? 12 : 10)} y={side ? 180 : s.y - 7}>{s.id}</text>
        ))}
      </g>
      {side ? (
        <>
          <AxisBox x={178} y={17} label="Z" />
          <AxisBox x={350} y={166} label="X" />
        </>
      ) : (
        <>
          <AxisBox x={350} y={177} label="X" />
          <AxisBox x={190} y={338} label="Y" />
          <g fontSize="13" fontWeight="600" fill="#111" textAnchor="middle">
            <text transform="translate(25 188) rotate(-90)">Left</text>
            <text transform="translate(375 187) rotate(90)">Right</text>
          </g>
        </>
      )}
    </svg>
  );
}

function FxWindow() {
  const btn = "h-[19px] border border-[#a9a9a9] bg-[#f4f4f4]";
  return (
    <div className="absolute top-[250px] bottom-0 left-[940px] flex w-[636px] flex-col overflow-hidden rounded-t-[10px] bg-[#ebebeb] font-[Inter,sans-serif] text-[11px] text-[#222] shadow-2xl shadow-black">
      <header className="flex h-[29px] shrink-0 items-center border-b border-[#d4d4d4] bg-[#e6e6e6] px-2">
        <div className="flex w-20 gap-2">
          {["Close window", "Minimise", "Zoom"].map((n) => (
            <button key={n} type="button" aria-label={n} className="size-3 rounded-full border border-[#bdbdbd] bg-[#cbcbcb]" />
          ))}
        </div>
        <h2 className="flex-1 text-center text-[13px] font-bold text-[#a9a9a9]">FX: Track 1 "AmbiEnc_RND"</h2>
        <div className="flex w-20 justify-end">
          <svg viewBox="0 0 16 18" className="h-[18px] w-4" fill="none" stroke="#b9b9b9"><path d="M4.500 1.500h7v2l-1 1v4l3 2v1.500h-11V10.500l3-2v-4l-1-1zM8 12v5" /></svg>
        </div>
      </header>
      <div className="flex min-h-0 flex-1">
        <div className="flex w-[410px] shrink-0 flex-col pl-[10px]">
          <div className="mt-[2px] flex shrink-0 gap-1.5">
            <input aria-label="Comment" className="h-[19px] w-[371px] border-b border-[#c0c0c0] bg-white outline-none" />
            <button type="button" className={clsx(btn, "w-[22px] leading-3")}>...</button>
          </div>
          <div className="mt-[7px] flex h-[19px] shrink-0 items-center gap-[5px] pl-[2px]">
            <div className="relative">
              <select aria-label="Preset" className={clsx(btn, "w-[147px] appearance-none px-[2px]")}>
                <option>No preset</option>
              </select>
              <LuChevronsUpDown className="pointer-events-none absolute top-1 right-[2px] size-3" />
            </div>
            <button type="button" className={clsx(btn, "w-[19px]")}>+</button>
            <button type="button" className={clsx(btn, "w-[50px]")}>Param</button>
            <button type="button" className={clsx(btn, "w-[84px]")}>64 in+out</button>
            <button type="button" className={clsx(btn, "w-[28px]")}>UI</button>
            <svg viewBox="0 0 17 17" className="size-[17px]"><circle cx="8.500" cy="8.500" r="8.500" fill="#444" /><path d="M9 9l2 6" stroke="#222" /></svg>
            <span className="relative ml-1 size-3.5">
              <input type="checkbox" aria-label="Enabled" defaultChecked className="peer block size-3.5 appearance-none rounded-[3px] bg-white" />
              <svg viewBox="0 0 14 14" className="pointer-events-none absolute inset-0 hidden peer-checked:block" fill="none" stroke="#111" strokeWidth="2"><path d="M3 7.500l3 3.500 5-8.500" /></svg>
            </span>
          </div>
          <div className="mt-1 flex min-h-0 w-[400px] flex-1 flex-col bg-[#505050] font-['Open_Sans','DejaVu_Sans',sans-serif]">
            <div className="flex h-8 shrink-0 items-center gap-[3px] pr-2.5 pl-[2px]">
              <button type="button" aria-label="Settings">
                <svg viewBox="0 0 28 28" className="size-7">
                  {Array.from({ length: 8 }, (_, i) => (
                    <path key={i} d="M11.500 6l1-5.500h3l1 5.500z" fill="#dde3ea" transform={`rotate(${i * 45} 14 14)`} />
                  ))}
                  <circle cx="14" cy="14" r="10" fill="#d5dbe3" />
                  <circle cx="14" cy="14" r="6.500" fill="none" stroke="#9aa3ae" />
                  <circle cx="14" cy="14" r="4" fill="#505050" stroke="#8a929c" />
                </svg>
              </button>
              <button type="button" aria-label="Help" className="size-[23px] rounded-full bg-[#b0b0b0] font-['Liberation_Serif',serif] text-[20px] leading-[23px] font-bold text-[#505050]">?</button>
              <span className="flex-1 text-right text-[11px] font-medium text-white">AmbiEncoder 3.1.0.3</span>
            </div>
            <div className="flex shrink-0 flex-col bg-[#d3d3d1] text-center text-[13px] font-semibold text-[#111]">
              <span className="h-0 leading-4">Front</span>
              <Plot height={360} />
              <span className="leading-[14px]">Back</span>
              <span className="-mb-[14px] leading-[14px]">Top</span>
              <Plot height={187} side />
            </div>
            <svg viewBox="0 0 400 9" className="h-[9px] w-[400px] shrink-0"><path d="M152 0H251L236 5Q202 11 170 5z" fill="#0b9fe0" /></svg>
            <div className="flex shrink-0 items-center pt-[5px] pr-[11px] text-[13px] font-semibold text-white">
              <label htmlFor="ch" className="w-[130px] text-right">CH:</label>
              <input id="ch" defaultValue="–" className="ml-[10px] h-6 w-6 border border-[#8a8a8a] bg-[#262f36] text-center outline-none" />
              <label htmlFor="src" className="ml-6 flex-1">Name:</label>
              <input id="src" defaultValue="–" className="h-6 w-[147px] bg-[#262f36] px-1 outline-none" />
            </div>
            <div className="flex shrink-0 items-center gap-[2px] pt-[10px] pr-[11px] text-[13px] font-semibold text-white">
              <span className="flex-1 pl-[5px]">Cartesian XYZ:</span>
              {["X", "Y", "Z"].map((a) => (
                <input key={a} aria-label={`Cartesian ${a}`} defaultValue="–" className="h-6 w-[91px] bg-[#262f36] px-1.5 text-right outline-none" />
              ))}
            </div>
          </div>
        </div>
        <div className="ml-1 flex min-w-0 flex-1 flex-col pr-[2px]">
          <label className="mt-px flex h-[25px] shrink-0 items-center gap-2.5 overflow-hidden bg-[#dcdcdc] pl-[13px] text-[12px] whitespace-nowrap">
            <span className="relative size-[13px] shrink-0">
              <input type="checkbox" defaultChecked className="peer block size-[13px] appearance-none border-2 border-[#222] bg-white" />
              <svg viewBox="0 0 13 13" className="pointer-events-none absolute inset-0 hidden peer-checked:block" fill="none" stroke="#111" strokeWidth="1.800"><path d="M3.500 6.500l2 3 4-6" /></svg>
            </span>
            VST3: AmbiEncoder_64 (ICST) (4
          </label>
          <div className="flex-1 bg-white" />
          <div className="h-[14px] shrink-0 border-t border-[#ddd] bg-[#fafafa] px-[3px] pt-[3px]">
            <div className="h-2 w-[201px] rounded-full bg-[#c2c2c2]" />
          </div>
          <div className="flex h-[14px] shrink-0 gap-[9px] overflow-hidden pt-[5px]">
            <button type="button" className={clsx(btn, "w-10 shrink-0")}>Add</button>
            <button type="button" className={clsx(btn, "w-12 shrink-0")}>Remove</button>
          </div>
        </div>
      </div>
    </div>
  );
}

/* ---------- page ---------- */

export default function App() {
  return (
    <div className="relative flex h-screen flex-col overflow-hidden bg-[#2b2b2b] font-['DejaVu_Sans',Verdana,sans-serif]">
      <div className="h-1.5 shrink-0 bg-[#ececec]" />
      <div className="flex h-4 shrink-0 items-center bg-[#3c3c3c] font-['Liberation_Sans',Arial,sans-serif]">
        <button type="button" className="w-[15px] text-[12px] font-bold text-[#ddd]">+</button>
        <button type="button" className="h-4 rounded-t-sm bg-[#808080] px-[5px] text-[12px] leading-4 font-bold text-[#111]">*Random_Walk.RPP</button>
        <span className="flex-1" />
        <button type="button" className="mr-1 h-3 bg-[#22ee10] px-px font-['DejaVu_Sans',sans-serif] text-[10px] leading-3 text-[#0b4a08]">MONITOR FX</button>
        <Power className="-mr-1 size-3.5" />
      </div>

      <div className="flex min-h-0 flex-1">
        <nav className="flex w-4 shrink-0 flex-col items-center justify-end gap-1 bg-[#3d3d3d] font-['Liberation_Sans',Arial,sans-serif]">
          <SideTab label="Mixer Master" className="h-[88px]" />
          <SideTab label="Mixer" active className="h-[53px]" />
          <span className="h-2 rotate-90 text-[10px] leading-2 font-bold text-white">!</span>
        </nav>
        <MixerStrip />

        <main className="flex min-w-0 flex-1 flex-col">
          <Toolbar rows={envelopeRows} className="mr-1.5 ml-2 items-center pt-3 *:w-[480px]" />

          <nav className="mt-3 mr-1.5 ml-2 flex h-[15px] shrink-0 bg-[#3a3a3a] font-['Liberation_Sans',Arial,sans-serif] text-[11px] leading-[15px] text-[#a2a2a2]">
            <span className="w-[11px] text-center font-bold">!</span>
            {dockTabs.map((t) => (
              <button
                key={t.name}
                type="button"
                className={clsx("mr-1 flex items-center gap-[2px] rounded-sm pr-2 pl-2", t.active ? "bg-[#828282] font-bold text-[#111]" : "bg-[#2e2e2e]")}
              >
                <CloseBox dark={t.active} />
                {t.name}
              </button>
            ))}
          </nav>

          <Transport />

          <div className="mt-[15px] flex min-h-0 flex-1">
            <div className="flex w-[408px] shrink-0 flex-col overflow-hidden">
              <Toolbar rows={mainRows} className="shrink-0 pl-[10px]" />
              <div className="mt-[11px] pl-[10px]"><TrackPanel /></div>
              <div className="pr-[9px] pl-[22px]">
                {lanes.map((l) => <EnvelopeLane key={l.name} {...l} />)}
              </div>
            </div>
            <div className="flex min-w-0 flex-1 flex-col pt-[120px]">
              <Ruler />
              <Arrange />
              <div className="flex h-[17px] shrink-0 items-center gap-2 bg-[#2b2b2b] pr-[44px]">
                <div className="h-1.5 flex-1 rounded-full bg-[#4a4a4a]" />
                <svg viewBox="0 0 30 10" className="h-2.5 w-[30px]" fill="#5a5a5a"><path d="M1 2v6l5-3zM21 1h3v3h3v3h-3v3h-3V7h-3V4h3z" /></svg>
              </div>
            </div>
          </div>
        </main>

        <Actions />

        <nav className="flex w-[10px] shrink-0 flex-col gap-1 overflow-hidden bg-[#3a3a3a] pt-[91px] font-['Liberation_Sans',Arial,sans-serif]">
          <SideTab label="FX: Monitoring" className="h-[100px]" />
          <SideTab label="Actions" active className="h-[68px]" />
          <SideTab label="Region/Marker Manager" className="h-[145px]" />
          <SideTab label="Media Explorer" className="h-[101px]" />
          <SideTab label="FX Browser" className="h-[84px]" />
          <SideTab label="Track Manager" className="h-[100px]" />
          <SideTab label="Region Render Matrix" className="h-[134px]" />
          <SideTab label="Performance" className="h-[91px]" />
        </nav>
      </div>

      <footer className="flex h-[21px] shrink-0 justify-between border-t border-[#333] bg-[#1a1a1a]">
        <div className="w-[37px] bg-[radial-gradient(circle_at_60%_60%,#3d5c2a,#1f3a1a_50%,#16260f)]" />
        <div className="w-[44px] bg-[radial-gradient(circle_at_40%_50%,#8a5a34,#3a2413_60%,#1e130b)]" />
      </footer>

      <SpiralWalk />
      <FxWindow />
    </div>
  );
}
